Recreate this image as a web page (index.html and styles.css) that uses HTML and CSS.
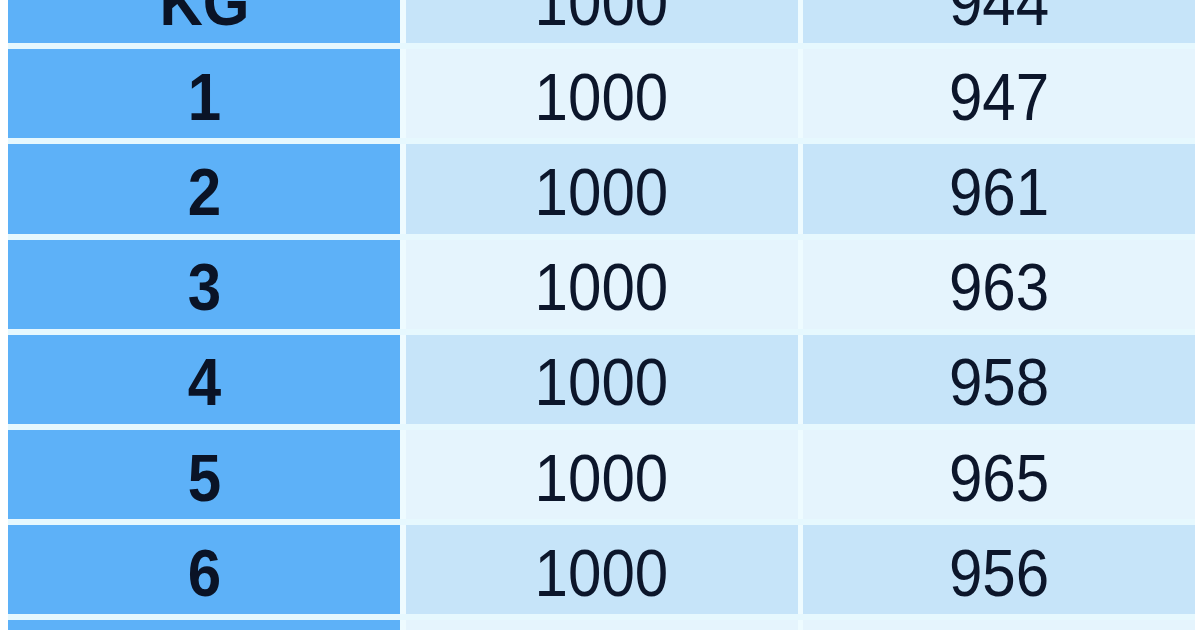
FILE: index.html
```html
<!DOCTYPE html>
<html>
<head>
<meta charset="utf-8">
<link rel="stylesheet" href="styles.css">
</head>
<body>
<div class="sheet">
  <div class="table">
    <div class="row dark"><div class="cell head"><span>KG</span></div><div class="cell"><span>1000</span></div><div class="cell"><span>944</span></div></div>
    <div class="row light"><div class="cell head"><span>1</span></div><div class="cell"><span>1000</span></div><div class="cell"><span>947</span></div></div>
    <div class="row dark"><div class="cell head"><span>2</span></div><div class="cell"><span>1000</span></div><div class="cell"><span>961</span></div></div>
    <div class="row light"><div class="cell head"><span>3</span></div><div class="cell"><span>1000</span></div><div class="cell"><span>963</span></div></div>
    <div class="row dark"><div class="cell head"><span>4</span></div><div class="cell"><span>1000</span></div><div class="cell"><span>958</span></div></div>
    <div class="row light"><div class="cell head"><span>5</span></div><div class="cell"><span>1000</span></div><div class="cell"><span>965</span></div></div>
    <div class="row dark"><div class="cell head"><span>6</span></div><div class="cell"><span>1000</span></div><div class="cell"><span>956</span></div></div>
    <div class="row light"><div class="cell head"><span>7</span></div><div class="cell"><span>1000</span></div><div class="cell"><span>959</span></div></div>
  </div>
</div>
</body>
</html>
```
FILE: styles.css
```css
html, body {
  margin: 0;
  padding: 0;
  background: #ffffff;
  overflow: hidden;
}
.sheet {
  width: 1200px;
  height: 630px;
  overflow: hidden;
  background: #ffffff;
}
.table {
  margin-top: -46px;
  margin-left: 8px;
  width: 1187px;
  display: flex;
  flex-direction: column;
  gap: 6px;
  background: #e6f8fe;
}
.row {
  display: grid;
  grid-template-columns: 392px 392px 392px;
  column-gap: 5.5px;
  height: 89.2px;
  background: #eefbff;
}
.cell {
  display: flex;
  align-items: center;
  justify-content: center;
  padding-top: 8px;
  box-sizing: border-box;
  font-family: "Liberation Sans", Arial, sans-serif;
  font-size: 66px;
  color: #0c162b;
  line-height: 1.15;
}
.cell span {
  display: inline-block;
  transform: scaleX(0.91);
}
.head {
  background: #5db1f8;
  font-weight: bold;
  color: #0a1326;
}
.dark .cell:not(.head) {
  background: #c6e4f9;
}
.light .cell:not(.head) {
  background: #e5f4fd;
}
```
